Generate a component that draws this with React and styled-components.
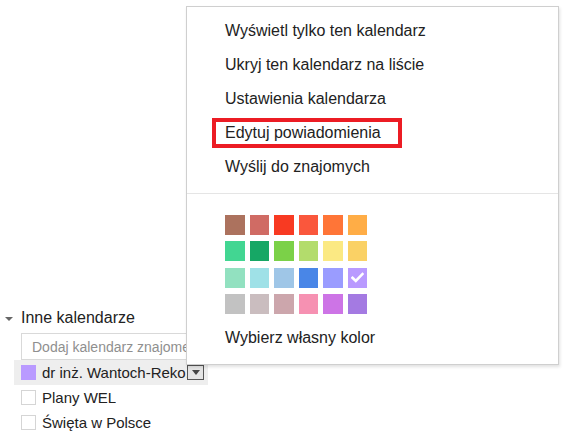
import React from "react";
import styled, { createGlobalStyle } from "styled-components";

const GlobalStyle = createGlobalStyle`
  html, body {
    margin: 0;
    background: #fff;
  }
  body {
    font-family: "Liberation Sans", Arial, sans-serif;
    color: #222;
  }
`;

const palette = [
  ["#ac725e", "#d06b64", "#f83a22", "#fa573c", "#ff7537", "#ffad46"],
  ["#42d692", "#16a765", "#7bd148", "#b3dc6c", "#fbe983", "#fad165"],
  ["#92e1c0", "#9fe1e7", "#9fc6e7", "#4986e7", "#9a9cff", "#b99aff"],
  ["#c2c2c2", "#cabdbf", "#cca6ac", "#f691b2", "#cd74e6", "#a47ae2"],
];

const selectedColor = "#b99aff";

const Page = styled.div`
  position: relative;
  width: 565px;
  height: 438px;
  overflow: hidden;
`;

const Sidebar = styled.div`
  width: 210px;
  padding-top: 307px;
  display: flex;
  flex-direction: column;
`;

const SectionHeader = styled.div`
  display: flex;
  align-items: center;
  height: 22px;
  font-size: 16px;
  color: #222;
  padding-left: 5px;
  gap: 8px;
`;

const Arrow = styled.span`
  width: 0;
  height: 0;
  border-left: 4px solid transparent;
  border-right: 4px solid transparent;
  border-top: 4px solid #666;
  margin-top: 1px;
`;

const AddInput = styled.input`
  margin: 4px 0 0 21px;
  width: 200px;
  height: 27px;
  box-sizing: border-box;
  border: 1px solid #d9d9d9;
  padding: 0 10px;
  font-family: inherit;
  font-size: 14px;
  color: #222;
  outline: none;
  &::placeholder {
    color: #8f8f8f;
  }
`;

const CalendarRow = styled.div`
  display: flex;
  align-items: center;
  height: 25px;
  margin-left: 14px;
  width: 194px;
  padding-left: 7px;
  box-sizing: border-box;
  background: ${(p) => (p.$active ? "#eeeeee" : "transparent")};
  &:first-of-type {
    margin-top: 4px;
    height: 26px;
  }
`;

const Swatch = styled.span`
  flex: none;
  width: 15px;
  height: 15px;
  box-sizing: border-box;
  background: ${(p) => p.$color || "#fff"};
  border: 1px solid ${(p) => (p.$color ? p.$color : "#d5d5d5")};
`;

const Name = styled.span`
  margin-left: 6px;
  font-size: 15px;
  color: #222;
  white-space: nowrap;
  overflow: hidden;
  text-overflow: clip;
  width: ${(p) => (p.$clip ? "145px" : "auto")};
`;

const RowButton = styled.span`
  flex: none;
  width: 17px;
  height: 15px;
  box-sizing: border-box;
  border: 1px solid #555;
  background: #e4e4e4;
  display: flex;
  align-items: center;
  justify-content: center;
  &::after {
    content: "";
    border-left: 4px solid transparent;
    border-right: 4px solid transparent;
    border-top: 5px solid #444;
  }
`;

const Menu = styled.div`
  position: absolute;
  left: 186px;
  top: 6px;
  width: 373px;
  height: 359px;
  box-sizing: border-box;
  background: #fff;
  border: 1px solid #cfcfcf;
  box-shadow: 1px 2px 3px rgba(0, 0, 0, 0.12);
  padding-top: 7px;
  display: flex;
  flex-direction: column;
`;

const MenuItem = styled.div`
  height: 34px;
  display: flex;
  align-items: center;
  padding-left: 38px;
  font-size: 16px;
  color: #222;
  white-space: nowrap;
`;

const Highlight = styled.span`
  display: inline-flex;
  align-items: center;
  height: 30px;
  box-sizing: border-box;
  margin-left: -13px;
  padding: 0 17px 0 9px;
  border: 4px solid #ec1c24;
`;

const Separator = styled.div`
  height: 1px;
  background: #e5e5e5;
  margin: 9px 0 21px;
`;

const ColorGrid = styled.div`
  display: grid;
  grid-template-columns: repeat(6, 19.5px);
  grid-auto-rows: 20px;
  column-gap: 5px;
  row-gap: 6.3px;
  padding-left: 38px;
`;

const ColorCell = styled.div`
  background: ${(p) => p.$color};
  display: flex;
  align-items: center;
  justify-content: center;
`;

const CustomColor = styled(MenuItem)`
  margin-top: 7px;
`;

function Check() {
  return (
    <svg width="13" height="11" viewBox="0 0 13 11">
      <path
        d="M1.5 5.8 L4.8 9 L11.5 2"
        fill="none"
        stroke="#fff"
        strokeWidth="2.6"
        strokeLinecap="square"
      />
    </svg>
  );
}

export default function App() {
  return (
    <Page>
      <GlobalStyle />
      <Sidebar>
        <SectionHeader>
          <Arrow />
          Inne kalendarze
        </SectionHeader>
        <AddInput placeholder="Dodaj kalendarz znajomego" />
        <CalendarRow $active>
          <Swatch $color={selectedColor} />
          <Name $clip>dr inż. Wantoch-Reko...</Name>
          <RowButton />
        </CalendarRow>
        <CalendarRow>
          <Swatch />
          <Name>Plany WEL</Name>
        </CalendarRow>
        <CalendarRow>
          <Swatch />
          <Name>Święta w Polsce</Name>
        </CalendarRow>
      </Sidebar>

      <Menu>
        <MenuItem>Wyświetl tylko ten kalendarz</MenuItem>
        <MenuItem>Ukryj ten kalendarz na liście</MenuItem>
        <MenuItem>Ustawienia kalendarza</MenuItem>
        <MenuItem>
          <Highlight>Edytuj powiadomienia</Highlight>
        </MenuItem>
        <MenuItem>Wyślij do znajomych</MenuItem>
        <Separator />
        <ColorGrid>
          {palette.flat().map((c) => (
            <ColorCell key={c} $color={c}>
              {c === selectedColor && <Check />}
            </ColorCell>
          ))}
        </ColorGrid>
        <CustomColor>Wybierz własny kolor</CustomColor>
      </Menu>
    </Page>
  );
}
